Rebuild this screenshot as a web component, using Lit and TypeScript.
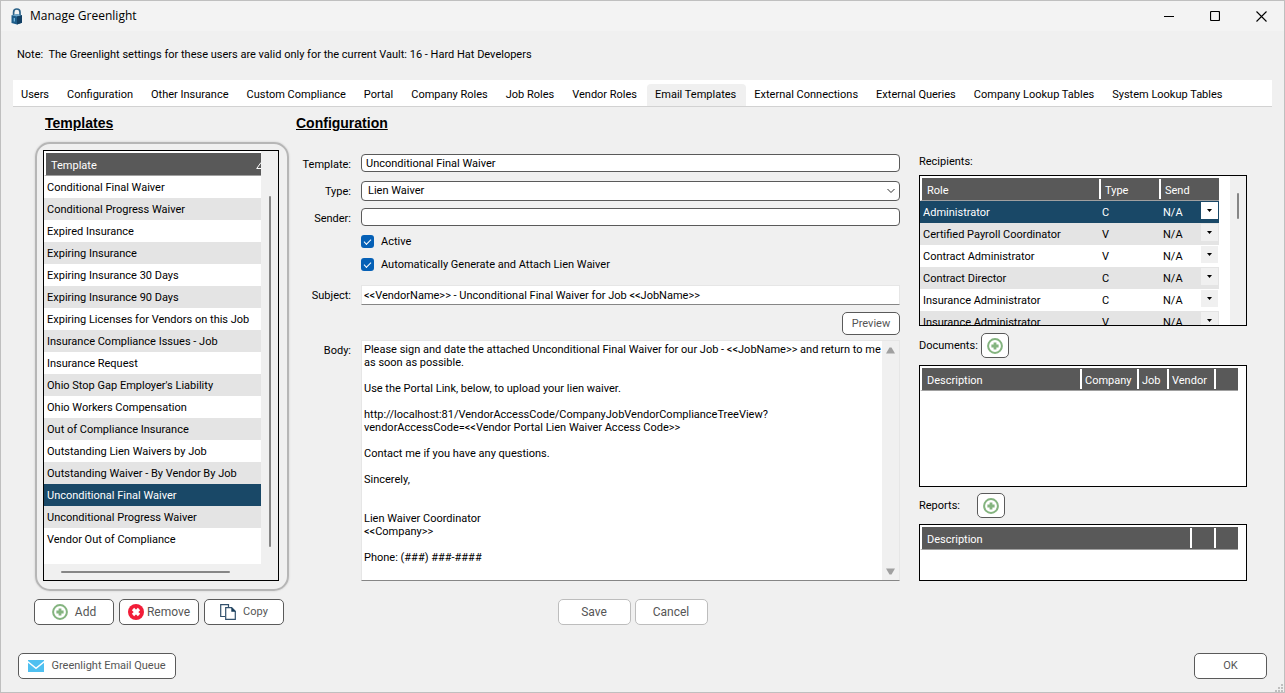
import { LitElement, html, css, svg } from "lit";
import { customElement, state } from "lit/decorators.js";
import { classMap } from "lit/directives/class-map.js";

const TABS = [
  "Users", "Configuration", "Other Insurance", "Custom Compliance", "Portal",
  "Company Roles", "Job Roles", "Vendor Roles", "Email Templates",
  "External Connections", "External Queries", "Company Lookup Tables", "System Lookup Tables",
];

const TEMPLATES = [
  "Conditional Final Waiver", "Conditional Progress Waiver", "Expired Insurance",
  "Expiring Insurance", "Expiring Insurance 30 Days", "Expiring Insurance 90 Days",
  "Expiring Licenses for Vendors on this Job", "Insurance Compliance Issues - Job",
  "Insurance Request", "Ohio Stop Gap Employer's Liability", "Ohio Workers Compensation",
  "Out of Compliance Insurance", "Outstanding Lien Waivers by Job",
  "Outstanding Waiver - By Vendor By Job", "Unconditional Final Waiver",
  "Unconditional Progress Waiver", "Vendor Out of Compliance",
];

const RECIPIENTS: [string, string][] = [
  ["Administrator", "C"], ["Certified Payroll Coordinator", "V"], ["Contract Administrator", "V"],
  ["Contract Director", "C"], ["Insurance Administrator", "C"], ["Insurance Administrator", "V"],
];

const BODY = `Please sign and date the attached Unconditional Final Waiver for our Job - <<JobName>> and return to me as soon as possible.

Use the Portal Link, below, to upload your lien waiver.

http://localhost:81/VendorAccessCode/CompanyJobVendorComplianceTreeView?
vendorAccessCode=<<Vendor Portal Lien Waiver Access Code>>

Contact me if you have any questions.

Sincerely,


Lien Waiver Coordinator
<<Company>>

Phone: (###) ###-####`;

const plusIcon = html`<svg width="16" height="16" viewBox="0 0 16 16" aria-hidden="true">
  <circle cx="8" cy="8" r="6.9" fill="#fff" stroke="#84b47f" stroke-width="2"/>
  <path d="M8 4.4v7.2M4.4 8h7.2" stroke="#84b47f" stroke-width="2.8"/></svg>`;

const removeIcon = html`<svg width="16" height="16" viewBox="0 0 16 16" aria-hidden="true">
  <circle cx="8" cy="8" r="8" fill="#f21d38"/>
  <path d="M5 5l6 6M11 5l-6 6" stroke="#fff" stroke-width="3.2"/></svg>`;

const copyIcon = html`<svg width="16" height="16" viewBox="0 0 16 16" aria-hidden="true">
  <path d="M5 12.500H.7V.7H8.500V3" fill="none" stroke="#31506c" stroke-width="1.200"/>
  <path d="M5.700 3.700h6l3.600 3.600v8H5.700z" fill="#fff" stroke="#31506c" stroke-width="1.200"/>
  <path d="M11.300 3.300v4.400h4.400z" fill="#143a58"/></svg>`;

const mailIcon = html`<svg width="16" height="12" viewBox="0 0 16 12" aria-hidden="true">
  <rect width="16" height="12" fill="#4fc0f0"/>
  <path d="M-.5 1.500L8 8.300l8.500-6.800" fill="none" stroke="#fff" stroke-width="1.500"/></svg>`;

const lockIcon = html`<svg width="12" height="17" viewBox="0 0 12 17" aria-hidden="true">
  <path d="M2.600 8V4.200a3.200 3.200 0 0 1 6.400 0V8" fill="none" stroke="#2b6288" stroke-width="1.700"/>
  <path d="M.5 7.200L6 6.200l5 1v7.500L6 16.500.5 15z" fill="#1d5c89"/>
  <path d="M.5 7.200L6 6.200l5 1L6 8.500z" fill="#6fa6c8"/>
  <path d="M6 8.500l5-1.300v7.500L6 16.500z" fill="#123f63"/>
  <path d="M3.300 10v3.500" stroke="#7fc0e6" stroke-width="1.200"/></svg>`;

@customElement("app-root")
export class AppRoot extends LitElement {
  @state() private tab = "Email Templates";
  @state() private template = "Unconditional Final Waiver";

  static styles = css`
    :host { display: block; font: 11px/14px Roboto, "Liberation Sans", sans-serif; color: #000; }
    * { box-sizing: border-box; }
    button, input, select, textarea { font: inherit; color: inherit; margin: 0; }
    svg { display: block; flex: none; }
    .window { min-height: 100vh; display: flex; flex-direction: column; background: #f0f0f0; border: 1px solid #bfbfbf; }
    .titlebar { display: flex; align-items: center; height: 30px; padding-left: 10px; background: #f3f3f3; }
    .title { margin: 0 auto 0 7px; font: 12px/16px "Open Sans", "Noto Sans", sans-serif; }
    .sys { width: 46px; height: 30px; border: 0; padding: 0; background: none; display: grid; place-items: center; }
    .note { margin: 17px 16px 18px; white-space: pre; }
    .tabs { display: flex; margin: 0 12px; background: #fff; border-bottom: 1px solid #d2d2d2; height: 27px; padding-top: 4px; }
    .tab { border: 0; background: none; padding: 0 10px 0 8px; line-height: 22px; white-space: nowrap; height: 22px; }
    .tab.on { background: #f0f0f0; border-radius: 4px 4px 0 0; }
    .panel { display: grid; grid-template-columns: 255px minmax(0, 1fr) 328px; padding: 6px 37px 0 33px; align-items: start; }
    h2 { margin: 0; font: bold 14px/20px "Liberation Sans", Arial, sans-serif; text-decoration: underline; }
    .left h2 { padding-left: 11px; }
    .frame { margin: 9px 0 0 1px; border: 2px solid #b6b6b6; border-radius: 15px; padding: 6px 8px 8px 6px; box-shadow: 0 0 2px #c4c4c4; }
    .box { border: 1px solid #000; background: #fff; display: flex; align-items: flex-start; overflow: hidden; }
    .list { flex: 1; min-width: 0; background: #fff; }
    .listbox { background: #f0f0f0; flex-wrap: wrap; }
    .vscroll { width: 17px; align-self: stretch; background: #f0f0f0; padding: 45px 7px 17px 8px; }
    .hscroll { width: 100%; height: 16px; padding: 7px 48px 7px 17px; }
    .thumb { background: #868686; height: 100%; border-radius: 1px; }
    table { border-collapse: separate; border-spacing: 0; table-layout: fixed; width: 100%; }
    th { background: #595959; color: #fff; font-weight: normal; text-align: left; height: 25px; padding: 3px 0 0 5px; border-top: 2px solid #fff; border-bottom: 1px solid #a0a0a0; }
    th:first-child { border-left: 2px solid #fff; }
    .cols th { background: linear-gradient(#fff, #fff) 0 1px / 2px 20px no-repeat #595959; }
    .cols th:first-child { background: #595959; }
    td { height: 22px; padding: 2px 3px 0; white-space: nowrap; overflow: hidden; }
    tbody tr:nth-child(even) { background: #e4e4e4; }
    tbody tr.sel { background: #194867; color: #fff; }
    .sort { display: flex; justify-content: space-between; align-items: center; }
    .filler { height: 14px; }
    .actions { display: flex; gap: 5px; margin: 8px 5px 0 0; }
    .btn { display: flex; align-items: center; justify-content: center; gap: 7px; height: 26px; padding: 0; background: #fff; border: 1px solid #5a5a5a; border-radius: 5px; color: #555; font-size: 12px; }
    .btn.quiet { border-color: #bdbdbd; }
    .btn.small { font-size: 11px; }
    .actions .btn { width: 80px; }
    .actions .tight { gap: 3px; }
    .mid { padding: 0 19px 0 7px; }
    .form { display: grid; grid-template-columns: 55px minmax(0, 1fr); column-gap: 10px; margin-top: 21px; }
    .form label.cap { text-align: right; padding-top: 4px; }
    .field { width: 100%; height: 18px; padding: 0 4px; border: 1px solid #5a5a5a; border-radius: 4px; background: #fff; outline: 0; display: block; }
    .form > .r { margin-bottom: 9px; }
    .form > .s { margin-bottom: 4px; }
    .pick { position: relative; }
    .pick select { appearance: none; height: 20px; padding: 0 6px; }
    .pick svg { position: absolute; right: 5px; top: 7px; pointer-events: none; }
    .form > .pick { margin-bottom: 7px; }
    .check { grid-column: 2; display: flex; align-items: center; gap: 7px; height: 23px; }
    .check.last { margin-bottom: 9px; }
    .check input { appearance: none; width: 13px; height: 13px; border-radius: 3px; background: #0560b6; display: grid; place-items: center; }
    .check input:checked::before { content: ""; width: 6px; height: 3px; border: solid #fff; border-width: 0 0 1px 1px; transform: translateY(-1px) rotate(-45deg); }
    .flat { height: 20px; border: 1px solid #e6e6e6; border-bottom-color: #868686; border-radius: 0; padding: 0 2px; }
    .preview { grid-column: 2; justify-self: end; width: 58px; height: 23px; margin: 7px 0 5px; }
    .memo { display: flex; border: 1px solid #e6e6e6; border-bottom-color: #868686; background: #fff; }
    .memo textarea { flex: 1; min-width: 0; height: 239px; border: 0; padding: 2px 0 0 2px; line-height: 13px; resize: none; outline: 0; overflow: hidden; background: #fff; }
    .bar { width: 17px; background: #f0f0f0; display: flex; flex-direction: column; justify-content: space-between; align-items: center; padding: 6px 0 5px; }
    .save { grid-column: 2; display: flex; justify-content: center; gap: 4px; margin-top: 18px; padding-left: 4px; }
    .save .btn, .ok { width: 73px; }
    .right { padding-top: 42px; }
    .sub { display: flex; align-items: center; height: 39px; gap: 3px; }
    .sub.wide { gap: 17px; height: 37px; }
    .sub .btn { width: 28px; height: 25px; }
    .rec { height: 151px; margin-top: 6px; }
    .docs { height: 122px; padding-right: 8px; }
    .reps { height: 57px; padding-right: 8px; }
    .grid { flex: 1; min-width: 0; padding-right: 11px; }
    .rec .vscroll { width: 16px; padding: 17px 7px 0; }
    .rec .thumb { height: 26px; }
    .w60 { width: 60px; padding-left: 6px; } .w57 { width: 57px; } .w30 { width: 30px; } .w47 { width: 47px; } .w24 { width: 24px; }
    .send { position: relative; padding: 0; }
    .send select { appearance: none; display: block; width: 100%; height: 22px; border: 0; background: none; padding: 2px 4px 0; outline: 0; }
    .drop { position: absolute; right: 1px; top: 1px; width: 17px; height: 17px; background: #f0f0f0; display: grid; place-items: center; pointer-events: none; }
    .sel .drop { background: #fff; }
    .footer { margin-top: auto; display: flex; justify-content: space-between; padding: 24px 17px 0; }
    .queue { width: 158px; gap: 7px; }
    .grip { align-self: flex-end; margin: 5px 1px 0; }
  `;

  private arrow(down: boolean) {
    return html`<svg width="9" height="7" viewBox="0 0 9 7" aria-hidden="true">
      <path d=${down ? "M0 .5h9L5.500 6.500h-2z" : "M0 6.500h9L5.500.5h-2z"} fill="#a0a0a0"/></svg>`;
  }

  render() {
    const grip = [[6, 0], [3, 3], [6, 3], [0, 6], [3, 6], [6, 6]];
    return html`<div class="window">
      <header class="titlebar">
        ${lockIcon}<span class="title">Manage Greenlight</span>
        <button class="sys" aria-label="Minimize"><svg width="10" height="10"><path d="M0 5.500h10" stroke="#000"/></svg></button>
        <button class="sys" aria-label="Maximize"><svg width="10" height="10"><rect x=".5" y=".5" width="9" height="9" rx="1" fill="none" stroke="#000" stroke-width="1.200"/></svg></button>
        <button class="sys" aria-label="Close"><svg width="11" height="11"><path d="M.5.5l10 10M10.500.5l-10 10" stroke="#000" stroke-width="1.100"/></svg></button>
      </header>
      <div class="note">Note:  The Greenlight settings for these users are valid only for the current Vault: 16 - Hard Hat Developers</div>
      <nav class="tabs" role="tablist">${TABS.map((t) => html`<button role="tab" aria-selected=${t === this.tab} class=${classMap({ tab: true, on: t === this.tab })} @click=${() => (this.tab = t)}>${t}</button>`)}</nav>
      <main class="panel">
        <section class="left">
          <h2>Templates</h2>
          <div class="frame"><div class="box listbox">
            <div class="list">
              <table>
                <thead><tr><th><div class="sort">Template<svg width="5" height="7" viewBox="0 0 5 7"><path d="M5 .5L.7 6.500H5" fill="none" stroke="#fff"/></svg></div></th></tr></thead>
                <tbody>${TEMPLATES.map((t) => html`<tr class=${classMap({ sel: t === this.template })} @click=${() => (this.template = t)}><td>${t}</td></tr>`)}</tbody>
              </table>
              <div class="filler"></div>
            </div>
            <div class="vscroll"><div class="thumb"></div></div>
            <div class="hscroll"><div class="thumb"></div></div>
          </div></div>
          <div class="actions">
            <button class="btn">${plusIcon}Add</button>
            <button class="btn tight">${removeIcon}Remove</button>
            <button class="btn small">${copyIcon}Copy</button>
          </div>
        </section>
        <section class="mid">
          <h2>Configuration</h2>
          <div class="form">
            <label class="cap" for="tpl">Template:</label><input id="tpl" class="field r" .value=${this.template}>
            <label class="cap" for="type">Type:</label>
            <div class="pick"><select id="type" class="field"><option>Lien Waiver</option></select>
              <svg width="8" height="6" viewBox="0 0 8 6"><path d="M.5 1L4 4.500 7.500 1" fill="none" stroke="#333"/></svg></div>
            <label class="cap" for="sender">Sender:</label><input id="sender" class="field s">
            <label class="check"><input type="checkbox" checked>Active</label>
            <label class="check last"><input type="checkbox" checked>Automatically Generate and Attach Lien Waiver</label>
            <label class="cap" for="subj">Subject:</label><input id="subj" class="field flat" value="<<VendorName>> - Unconditional Final Waiver for Job <<JobName>>">
            <button class="btn small preview">Preview</button>
            <label class="cap" for="body">Body:</label>
            <div class="memo"><textarea id="body" .value=${BODY}></textarea><div class="bar">${this.arrow(false)}${this.arrow(true)}</div></div>
            <div class="save"><button class="btn quiet">Save</button><button class="btn quiet">Cancel</button></div>
          </div>
        </section>
        <section class="right">
          <div>Recipients:</div>
          <div class="box rec">
            <div class="grid"><table>
              <thead><tr class="cols"><th>Role</th><th class="w60">Type</th><th class="w60">Send</th></tr></thead>
              <tbody>${RECIPIENTS.map(([role, type], i) => html`<tr class=${classMap({ sel: i === 0 })}><td>${role}</td><td>${type}</td><td class="send">
                <select aria-label="Send"><option>N/A</option></select>
                <span class="drop"><svg width="5" height="3"><path d="M0 0h5L2.500 3z"/></svg></span></td></tr>`)}</tbody>
            </table></div>
            <div class="vscroll"><div class="thumb"></div></div>
          </div>
          <div class="sub">Documents:<button class="btn" aria-label="Add document">${plusIcon}</button></div>
          <div class="box docs"><table>
            <thead><tr class="cols"><th>Description</th><th class="w57">Company</th><th class="w30">Job</th><th class="w47">Vendor</th><th class="w24"></th></tr></thead>
          </table></div>
          <div class="sub wide">Reports:<button class="btn" aria-label="Add report">${plusIcon}</button></div>
          <div class="box reps"><table>
            <thead><tr class="cols"><th>Description</th><th class="w24"></th><th class="w24"></th></tr></thead>
          </table></div>
        </section>
      </main>
      <footer class="footer">
        <button class="btn small queue">${mailIcon}Greenlight Email Queue</button>
        <button class="btn small ok">OK</button>
      </footer>
      <svg class="grip" width="8" height="8" aria-hidden="true">${grip.map(([x, y]) => svg`<rect x=${x} y=${y} width="2" height="2" fill="#bfbfbf"/>`)}</svg>
    </div>`;
  }
}
